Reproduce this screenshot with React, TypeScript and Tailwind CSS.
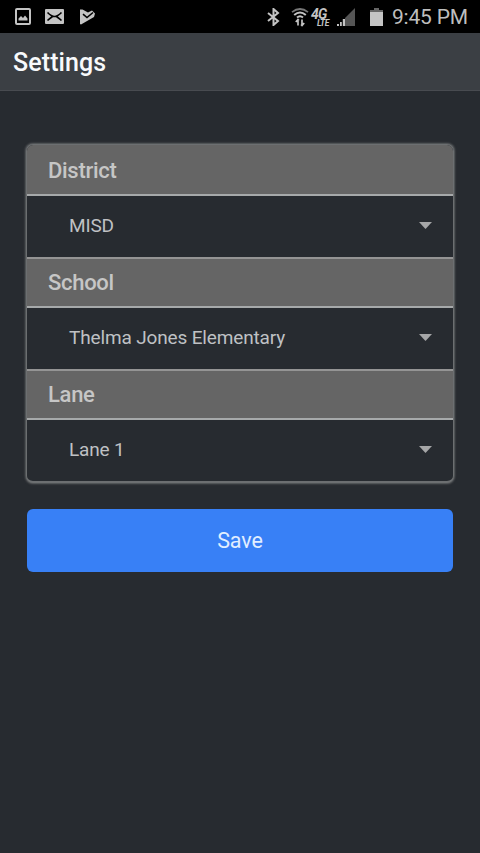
const groups = [
  { label: "District", value: "MISD" },
  { label: "School", value: "Thelma Jones Elementary" },
  { label: "Lane", value: "Lane 1" },
];

function StatusBar() {
  return (
    <div className="flex h-[33px] items-center bg-black pl-[15px] pr-[12px] text-[#c4c4c4]">
      <svg className="h-[17px] w-[16px]" viewBox="0 0 16 17">
        <rect x="1" y="1" width="14" height="15" rx="1" fill="none" stroke="currentColor" strokeWidth="2" />
        <path d="M3.5 12.5 V10.5 L6 8 L8 10 L10 7.5 L12.5 10.5 V12.5Z" fill="currentColor" />
      </svg>
      <svg className="ml-[14px] h-[15px] w-[19px]" viewBox="0 0 19 15">
        <rect width="19" height="15" rx="1" fill="currentColor" />
        <path d="M2.5 3.5 C6 7 8 7.5 9.5 7.5 C11 7.5 13 7 16.5 3.5 M2.5 11.5 C5 9 6.5 8.3 7.5 7.5 M16.5 11.5 C14 9 12.5 8.3 11.5 7.5" fill="none" stroke="#000" strokeWidth="1.7" />
      </svg>
      <svg className="ml-[16px] h-[16px] w-[15px]" viewBox="0 0 15 16">
        <path d="M0 0.5 H2.5 L8 3.5 L12 1.5 L15 4.5 L14 8 L1 15.5 L0 15Z" fill="currentColor" />
        <path d="M3 5.2 L7 8.5 L13 3.5" fill="none" stroke="#000" strokeWidth="1.6" />
      </svg>
      <div className="flex-1" />
      <svg className="h-[18px] w-[13px]" viewBox="0 0 13 18">
        <path d="M1 5 L11 13 L6.5 17 V1 L11 5 L1 13" fill="none" stroke="currentColor" strokeWidth="2" />
      </svg>
      <svg className="ml-[11px] h-[20px] w-[18px]" viewBox="0 0 18 20">
        <path d="M1 5.2 Q9 -1.2 17 5.2" fill="none" stroke="#777" strokeWidth="1.7" />
        <path d="M3.2 8 Q9 3 14.8 8 M6 10.6 Q9 8 12 10.6" fill="none" stroke="currentColor" strokeWidth="2" />
        <path d="M7 12.5 V18.5 M4.8 15 L7 12.5 L8 13.5 M11 12.5 V18.5 M13.2 16 L11 18.5 L10 17.5" fill="none" stroke="currentColor" strokeWidth="1.7" />
      </svg>
      <div className="ml-[2px] flex h-[20px] w-[20px] flex-col font-bold italic">
        <span className="h-[12px] text-[14px] leading-[15px] tracking-[-0.8px]">4G</span>
        <span className="ml-[6px] h-[8px] text-[8.5px] leading-[8px] tracking-[-0.4px]">LTE</span>
      </div>
      <svg className="ml-[6px] h-[18px] w-[18px]" viewBox="0 0 18 18">
        <path d="M8 10 L18 0 V18 H8Z" fill="#555" />
        <path d="M0 16 H2 V18 H0Z M3 14 H4.8 V18 H3Z M5.8 11 H8 V18 H5.8Z" fill="currentColor" />
      </svg>
      <svg className="ml-[15px] h-[18px] w-[13px]" viewBox="0 0 13 18">
        <path d="M4 0 H9 V2 H13 V5 H0 V2 H4Z" fill="#666" />
        <path d="M0 4 H13 V18 H0Z" fill="currentColor" />
      </svg>
      <span className="ml-[9px] w-[76px] whitespace-nowrap pt-[2px] text-[21px] leading-[31px] tracking-[-0.2px] text-[#bebebe]">9:45 PM</span>
    </div>
  );
}

export default function App() {
  return (
    <div className="h-[853px] w-[480px] overflow-hidden bg-[#272b30] font-['Roboto',sans-serif]">
      <StatusBar />
      <header className="flex h-[58px] items-center border-b border-[#484b50] bg-[#3b3f44] pl-[13px] pt-[2px]">
        <h1 className="text-[25px] font-medium tracking-[0.1px] text-[#f8fafc]">Settings</h1>
      </header>
      <main className="px-[26px] pt-[53px]">
        <section className="overflow-hidden rounded-[7px] border border-b-2 border-[#6c6f71] bg-[#272b30] shadow-[0_0_2px_1px_#606365]">
          {groups.map((group, index) => (
            <div key={group.label}>
              <h2 className={`flex h-[51px] items-center border-b-2 border-b-[#a6a9aa] bg-[#656565] pl-[21px] text-[22px] font-medium tracking-[-0.3px] text-[#c6c6c6] ${index ? "border-t-2 border-t-[#949494]" : "pt-[1px]"}`}>
                {group.label}
              </h2>
              <button className="flex h-[61px] w-full items-center justify-between pl-[42px] pr-[21px] text-[19px] tracking-[-0.15px] text-[#bfc1c4]">
                <span>{group.value}</span>
                <svg className="mb-[2px] h-[7px] w-[13px]" viewBox="0 0 13 7">
                  <path d="M0 0 H13 L6.5 7Z" fill="#a5a6a7" />
                </svg>
              </button>
            </div>
          ))}
        </section>
        <div className="px-px pt-[26px]">
          <button className="flex h-[63px] w-full items-center justify-center rounded-[6px] bg-[#3880f6] pt-px text-[21.5px] tracking-[-0.1px] text-[#e1eeff]">Save</button>
        </div>
      </main>
    </div>
  );
}
